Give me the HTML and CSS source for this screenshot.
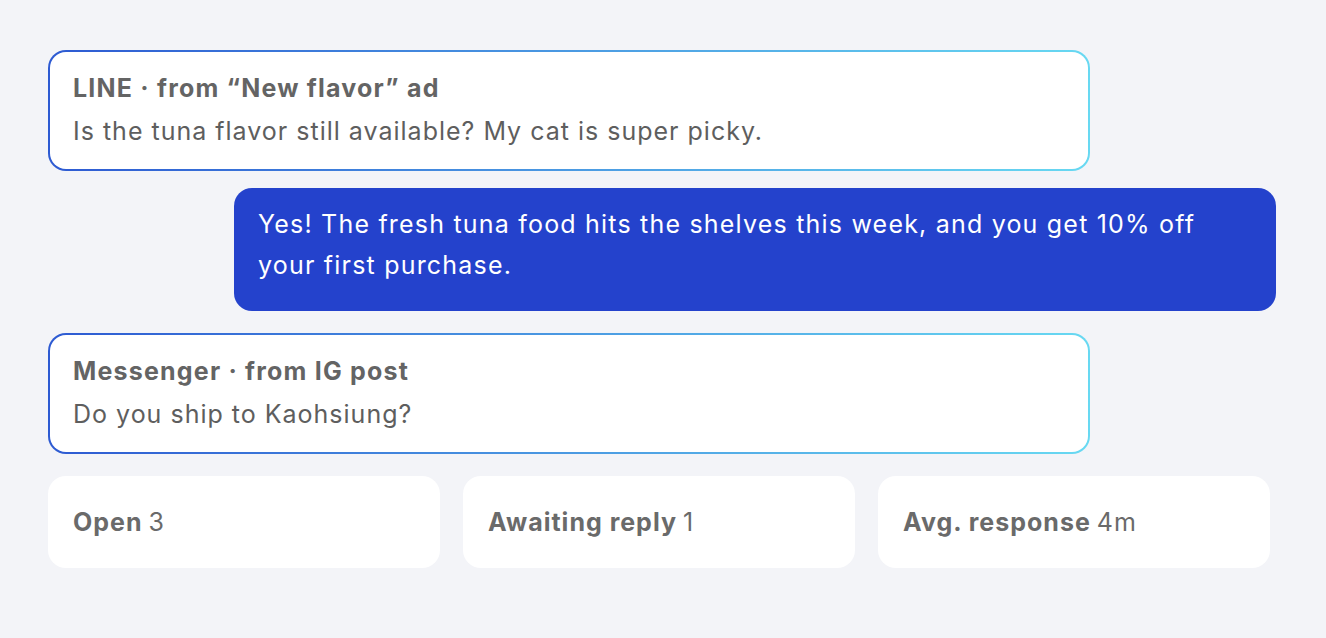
FILE: index.html
```html
<!DOCTYPE html>
<html lang="en">
<head>
  <meta charset="UTF-8">
  <title>Inbox</title>
  <link rel="stylesheet" href="styles.css">
</head>
<body>

  <div class="inbox">
    <div class="bubble incoming">
      <div class="source">LINE · from “New flavor” ad</div>
      <div class="text">Is the tuna flavor still available? My cat is super picky.</div>
    </div>

    <div class="bubble outgoing">
      <div class="text">Yes! The fresh tuna food hits the shelves this week, and you get 10% off your first purchase.</div>
    </div>

    <div class="bubble incoming">
      <div class="source">Messenger · from IG post</div>
      <div class="text">Do you ship to Kaohsiung?</div>
    </div>

    <div class="stats">
      <div class="stat"><strong>Open</strong> 3</div>
      <div class="stat"><strong>Awaiting reply</strong> 1</div>
      <div class="stat"><strong>Avg. response</strong> 4m</div>
    </div>
  </div>

</body>
</html>
```

FILE: styles.css
```css
body {
  margin: 0;
  background-color: #f3f4f8;
  font-family: Inter, "Noto Sans", sans-serif;
  color: #5e5e5e;
}

.inbox {
  width: 1228px;
  padding: 50px 48px;
  display: flex;
  flex-direction: column;
}

.bubble {
  width: 84.85%;
  box-sizing: border-box;
  border-radius: 18px;
  font-size: 25px;
  letter-spacing: 1px;
}

.incoming {
  align-self: flex-start;
  border: 2px solid transparent;
  background:
    linear-gradient(#fff, #fff) padding-box,
    linear-gradient(90deg, #2d5ad2, #68d9f2) border-box;
  padding: 18px 23px 20px;
}

.outgoing {
  align-self: flex-end;
  background-color: #2442cc;
  color: #fff;
  padding: 16px 40px 25px 24px;
  margin: 17px 0 22px;
  letter-spacing: 1.2px;
}

.source {
  font-weight: 700;
  line-height: 36px;
  margin-bottom: 7px;
  color: #646464;
  letter-spacing: 1.2px;
}

.incoming .text {
  line-height: 36px;
}

.outgoing .text {
  line-height: 41px;
}

.stats {
  width: 1222px;
  display: flex;
  justify-content: space-between;
  margin-top: 22px;
}

.stat {
  width: 392px;
  box-sizing: border-box;
  background-color: #fff;
  border-radius: 18px;
  height: 92px;
  display: flex;
  align-items: center;
  padding: 0 25px;
  font-size: 25px;
  letter-spacing: 1px;
  color: #6a6a6a;
}

.stat strong {
  font-weight: 700;
  margin-right: 6px;
}
```
